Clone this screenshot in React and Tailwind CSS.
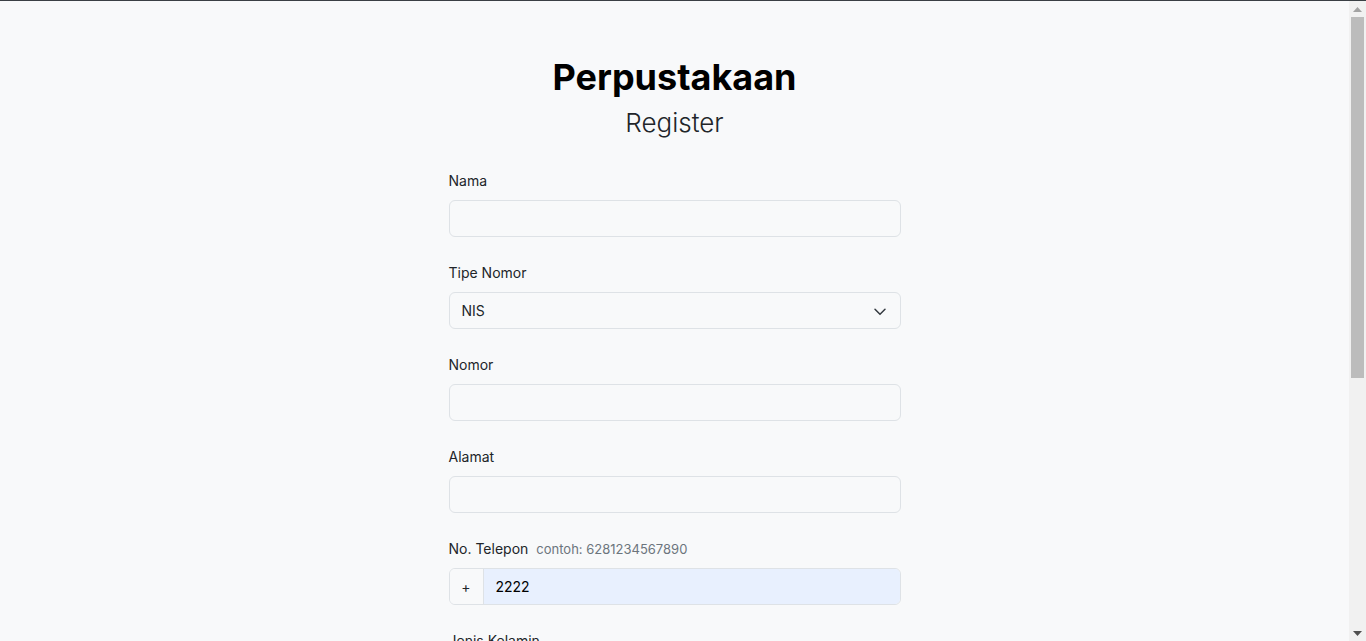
import { useState } from "react"

const fields = [
  { label: "Nama", type: "text" },
  { label: "Tipe Nomor", type: "select", options: ["NIS", "NIP"] },
  { label: "Nomor", type: "text" },
  { label: "Alamat", type: "text" },
]

const moreFields = [
  { label: "Jenis Kelamin", type: "select", options: ["Laki-laki", "Perempuan"] },
  { label: "Email", type: "email" },
  { label: "Password", type: "password" },
]

function Chevron() {
  return (
    <svg width="14" height="10" viewBox="0 0 16 12" className="pointer-events-none absolute right-[14px] top-1/2 -translate-y-1/2">
      <path d="m2 4 6 6 6-6" fill="none" stroke="#343a40" strokeWidth="1.8" strokeLinecap="round" strokeLinejoin="round" />
    </svg>
  )
}

function Field({ label, type, options }) {
  const inputClass =
    "block w-full h-[37px] rounded-[6px] border border-[#dee2e6] bg-[#f8f9fa] px-3 text-[14px] text-[#212529] outline-none"
  return (
    <div className="mb-[25px]">
      <label className="mb-[9px] block text-[14px] leading-[21px] text-[#212529]">{label}</label>
      {type === "select" ? (
        <div className="relative">
          <select className={`${inputClass} appearance-none`}>
            {options.map((o) => (
              <option key={o}>{o}</option>
            ))}
          </select>
          <Chevron />
        </div>
      ) : (
        <input type={type} className={inputClass} />
      )}
    </div>
  )
}

// browser-style scrollbar drawn at the right edge
function ScrollBar() {
  return (
    <aside className="sticky top-0 flex h-[640px] w-[17px] shrink-0 flex-col bg-[#f1f1f1]">
      <div className="flex h-[16px] items-center justify-center">
        <svg width="9" height="5" viewBox="0 0 9 5"><path d="M0 5 4.5 0 9 5z" fill="#a3a3a3" /></svg>
      </div>
      <div className="mx-[2px] h-[361px] bg-[#bcbcbc]" />
      <div className="mt-auto flex h-[15px] items-center justify-center">
        <svg width="9" height="5" viewBox="0 0 9 5"><path d="M0 0 4.5 5 9 0z" fill="#505050" /></svg>
      </div>
    </aside>
  )
}

export default function App() {
  const [phone, setPhone] = useState("2222")

  return (
    <div
      className="flex h-screen overflow-hidden border-t border-[#3a3f44] bg-[#f8f9fa] text-[#212529]"
      style={{ fontFamily: "Inter, 'Liberation Sans', sans-serif" }}
    >
      <main className="flex-1">
        <div className="mx-auto w-[452px] pt-[54px] pb-[60px]">
          <h1 className="text-center text-[36px] font-bold leading-[44px] text-black">Perpustakaan</h1>
          <h2 className="mt-[8px] text-center text-[26px] font-light leading-[32px] text-[#212529]">Register</h2>

          <form className="mt-[31px]" onSubmit={(e) => e.preventDefault()}>
            {fields.map((f) => (
              <Field key={f.label} {...f} />
            ))}

            {/* No. Telepon */}
            <div className="mb-[25px]">
              <label className="mb-[9px] flex h-[21px] items-baseline gap-2 text-[14px] leading-[21px] text-[#212529]">
                No. Telepon
                <span className="text-[13px] leading-[20px] text-[#6c757d]">contoh: 6281234567890</span>
              </label>
              <div className="flex h-[37px] w-full overflow-hidden rounded-[6px] border border-[#dee2e6]">
                <span className="flex w-[34px] items-center justify-center border-r border-[#dee2e6] bg-[#f8f9fa] text-[14px] text-[#212529]">
                  +
                </span>
                <input
                  value={phone}
                  onChange={(e) => setPhone(e.target.value)}
                  className="flex-1 bg-[#e8f0fe] px-3 text-[14px] text-black outline-none"
                />
              </div>
            </div>

            {moreFields.map((f) => (
              <Field key={f.label} {...f} />
            ))}

            <button className="h-[38px] w-full rounded-[6px] bg-[#0d6efd] text-[14px] font-medium text-white">
              Register
            </button>
            <p className="mt-4 text-center text-[14px] text-[#6c757d]">
              Sudah punya akun? <a className="text-[#0d6efd]">Login</a>
            </p>
          </form>
        </div>
      </main>
      <ScrollBar />
    </div>
  )
}
